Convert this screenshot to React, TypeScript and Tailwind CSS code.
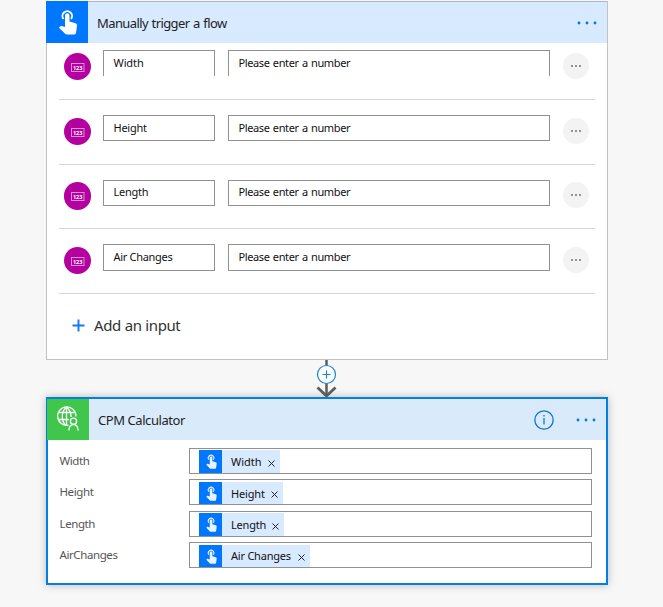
import React from "react";

function TapIcon({ className }: { className: string }) {
  return (
    <svg viewBox="0 0 18 26" className={className} fill="none">
      <path d="M4.500 10A4.800 4.800 0 1 1 12 10" stroke="currentColor" strokeWidth="1.900" />
      <path
        d="M6 6.600a2.250 2.250 0 0 1 4.500 0v5.900l6 1.800c1.100.4 1.600 1.200 1.500 2.300l-.9 6.800c-.2 1.400-.8 2.100-2 2.100H8c-.9 0-1.500-.3-2.100-.9L.4 19.200c-.5-.6-.3-1.100.2-1.500.9-.8 1.900-.9 2.900-.5l2.500.8z"
        fill="currentColor"
      />
    </svg>
  );
}

function GlobeUserIcon() {
  return (
    <svg viewBox="0 0 24 26" className="h-[26px] w-6" fill="none" stroke="white" strokeWidth="1.300">
      <path d="M12.500 19.200A9.200 9.200 0 1 1 20 10.500" />
      <path d="M10 19.400C5 15.500 5 5 10.500 1.200c3 2.300 4.700 5.500 4.600 9.800M10.500 1.200v18.200M2.300 6.500h16.800M2.300 13.500h10.500" />
      <circle cx="17.500" cy="15.200" r="3.100" />
      <path d="M12.800 24.500c.3-3.600 2-6 4.700-6s4.400 2.400 4.700 6" />
    </svg>
  );
}

function NumberBadge({ className }: { className: string }) {
  return (
    <div className={"w-[27px] shrink-0 overflow-hidden rounded-full bg-[#b4009e] " + className}>
      <svg viewBox="0 0 27 27" className="h-[27px] w-[27px]">
        <rect x="7.500" y="10.500" width="12.500" height="8" fill="none" stroke="#e08cd5" strokeWidth="1" />
        <text x="13.700" y="16.700" textAnchor="middle" fontSize="5.600" fontWeight="700" fill="#fff" fontFamily="Noto Sans, sans-serif">123</text>
      </svg>
    </div>
  );
}

function Dots({ color, r, gap }: { color: string; r: number; gap: number }) {
  return (
    <svg width="20" height="4" viewBox="0 0 20 4" fill={color}>
      <circle cx={10 - gap} cy="2" r={r} />
      <circle cx="10" cy="2" r={r} />
      <circle cx={10 + gap} cy="2" r={r} />
    </svg>
  );
}

const inputs = [
  { name: "Width", row: "h-[57px] pt-[7px]", box: "h-[26px] border-b-0 pt-[4px]", badge: "mt-[3px] h-[27px]", more: "mt-[3px]", text: "tracking-[-0.1px]" },
  { name: "Height", row: "h-[65px] pt-[15px]", box: "h-[26px] pt-[4px]", badge: "mt-[3px] h-[27px]", more: "mt-[3px]", text: "tracking-[-0.25px]" },
  { name: "Length", row: "h-[64px] pt-[15px]", box: "h-[26px] pt-[3px]", badge: "mt-[2px] h-7", more: "mt-[2px]", text: "tracking-[-0.25px]" },
  { name: "Air Changes", row: "h-[65px] pt-[15px]", box: "h-[27px] pt-[4px]", badge: "mt-[3px] h-[27px]", more: "mt-[3px]", text: "tracking-[-0.3px]" },
];

const params = [
  { label: "Width", token: "Width", row: "h-[31px]", chip: "mt-px h-[23px] w-[81px]", text: "tracking-[0px]" },
  { label: "Height", token: "Height", row: "h-8", chip: "mt-[2px] h-[22px] w-[84px]", text: "tracking-[-0.15px] pt-px" },
  { label: "Length", token: "Length", row: "h-[31px]", chip: "mt-px h-[23px] w-[85px]", text: "tracking-[-0.2px]" },
  { label: "AirChanges", token: "Air Changes", row: "h-[26px]", chip: "mt-[2px] h-[22px] w-[111px]", text: "tracking-[-0.22px]" },
];

export default function App() {
  return (
    <div className="h-[607px] w-[663px] overflow-hidden bg-[#f7f7f7] pl-[46px] pt-px font-['Noto_Sans',sans-serif] text-[#111]">
      <section className="h-[359px] w-[562px] border border-[#c2c2c2] bg-white">
        <header className="-ml-px -mt-px flex h-[42px] w-[561px] items-center border-t border-[#a9b9c9] bg-[#d8eaff]">
          <div className="-mt-px flex h-[42px] w-[42px] items-center justify-center bg-[#0077ff] pl-[2px] text-white">
            <TapIcon className="h-[26px] w-[18px]" />
          </div>
          <h1 className="ml-[9px] flex-1 text-[13px] leading-5 tracking-[-0.6px] text-[#222] [word-spacing:0.8px]">Manually trigger a flow</h1>
          <div className="mr-[10px]"><Dots color="#0078e0" r={1.4} gap={8} /></div>
        </header>
        <div className="ml-3 w-[536px]">
          {inputs.map((it) => (
            <div key={it.name} className={"flex items-start border-b border-[#d5d5d5] pl-[5px] text-[11px] leading-4 " + it.row}>
              <NumberBadge className={it.badge} />
              <div className={"ml-3 w-[112px] border border-[#919191] pl-[9.5px] " + it.box}>
                <span className={it.text}>{it.name}</span>
              </div>
              <div className={"ml-[13px] w-[322px] border border-[#919191] pl-[9.5px] tracking-[-0.38px] [word-spacing:0.8px] " + it.box}>Please enter a number</div>
              <div className={"ml-[13px] flex h-[26px] w-[26px] items-center justify-center rounded-full bg-[#f3f3f3] " + it.more}>
                <Dots color="#666" r={0.9} gap={4} />
              </div>
            </div>
          ))}
        </div>
        <div className="flex h-[63px] items-center pl-[25px]">
          <svg width="13" height="13" viewBox="0 0 13 13" className="text-[#1677f5]">
            <path d="M6.500 .5v12M.5 6.500h12" stroke="currentColor" strokeWidth="1.900" />
          </svg>
          <span className="-mt-px ml-[9px] text-[15px] leading-5 tracking-[-0.4px] text-[#333] [word-spacing:0.3px]">Add an input</span>
        </div>
      </section>

      <div className="flex h-[37px] w-[562px] justify-center">
        <svg width="24" height="37" viewBox="0 0 24 37" className="-ml-px" fill="none">
          <path d="M11.500 0v36" stroke="#5c5c5c" strokeWidth="2.500" />
          <path d="M2.500 27.500l9 8.500 9-8.500" stroke="#5c5c5c" strokeWidth="2.800" />
          <circle cx="11.500" cy="14.500" r="9" fill="white" stroke="#1683d9" strokeWidth="1.200" />
          <path d="M11.500 10.500v8M7.500 14.500h8" stroke="#1683d9" strokeWidth="1.200" />
        </svg>
      </div>

      <section className="h-[188px] w-[562px] border-2 border-[#0080e2] bg-white shadow-[0_0_8px_rgba(0,0,0,0.25)]">
        <header className="-ml-px flex h-[41px] w-[559px] items-center bg-[#d9ebfb]">
          <div className="flex h-[41px] w-[42px] items-center justify-center bg-[#40c64b] pb-px">
            <GlobeUserIcon />
          </div>
          <h2 className="ml-[9px] flex-1 text-[13px] leading-5 tracking-[-0.43px] text-[#222]">CPM Calculator</h2>
          <svg width="20" height="20" viewBox="0 0 20 20" fill="none" stroke="#1476d3" className="mr-[22px]">
            <circle cx="10" cy="10" r="9.200" strokeWidth="1.300" />
            <path d="M10 8v6.500M10 5v1.600" strokeWidth="1.300" />
          </svg>
          <div className="mr-[10px]"><Dots color="#0078e0" r={1.4} gap={8} /></div>
        </header>
        <div className="pl-[11px] pt-2">
          {params.map((p) => (
            <div key={p.label} className={"flex items-start " + p.row}>
              <span className="w-[130px] pl-[0.5px] pt-[4px] text-[11.5px] leading-[17px] tracking-[-0.4px] text-[#555]">{p.label}</span>
              <div className="h-[26px] w-[403px] border border-[#919191] pl-[9px]">
                <div className={"flex items-center bg-[#d8eaff] " + p.chip}>
                  <div className="flex h-full w-[23px] shrink-0 items-center justify-center bg-[#0077ff] pl-px text-[#e8f3ff]">
                    <TapIcon className="h-[15px] w-[11px]" />
                  </div>
                  <span className={"ml-[9px] flex-1 whitespace-nowrap text-[11px] leading-4 " + p.text}>{p.token}</span>
                  <svg width="7" height="7" viewBox="0 0 7 7" className="mr-[5px] mt-[3px] shrink-0">
                    <path d="M.5 .5l6 6M6.500 .5l-6 6" stroke="#222" strokeWidth="1" />
                  </svg>
                </div>
              </div>
            </div>
          ))}
        </div>
      </section>
    </div>
  );
}
